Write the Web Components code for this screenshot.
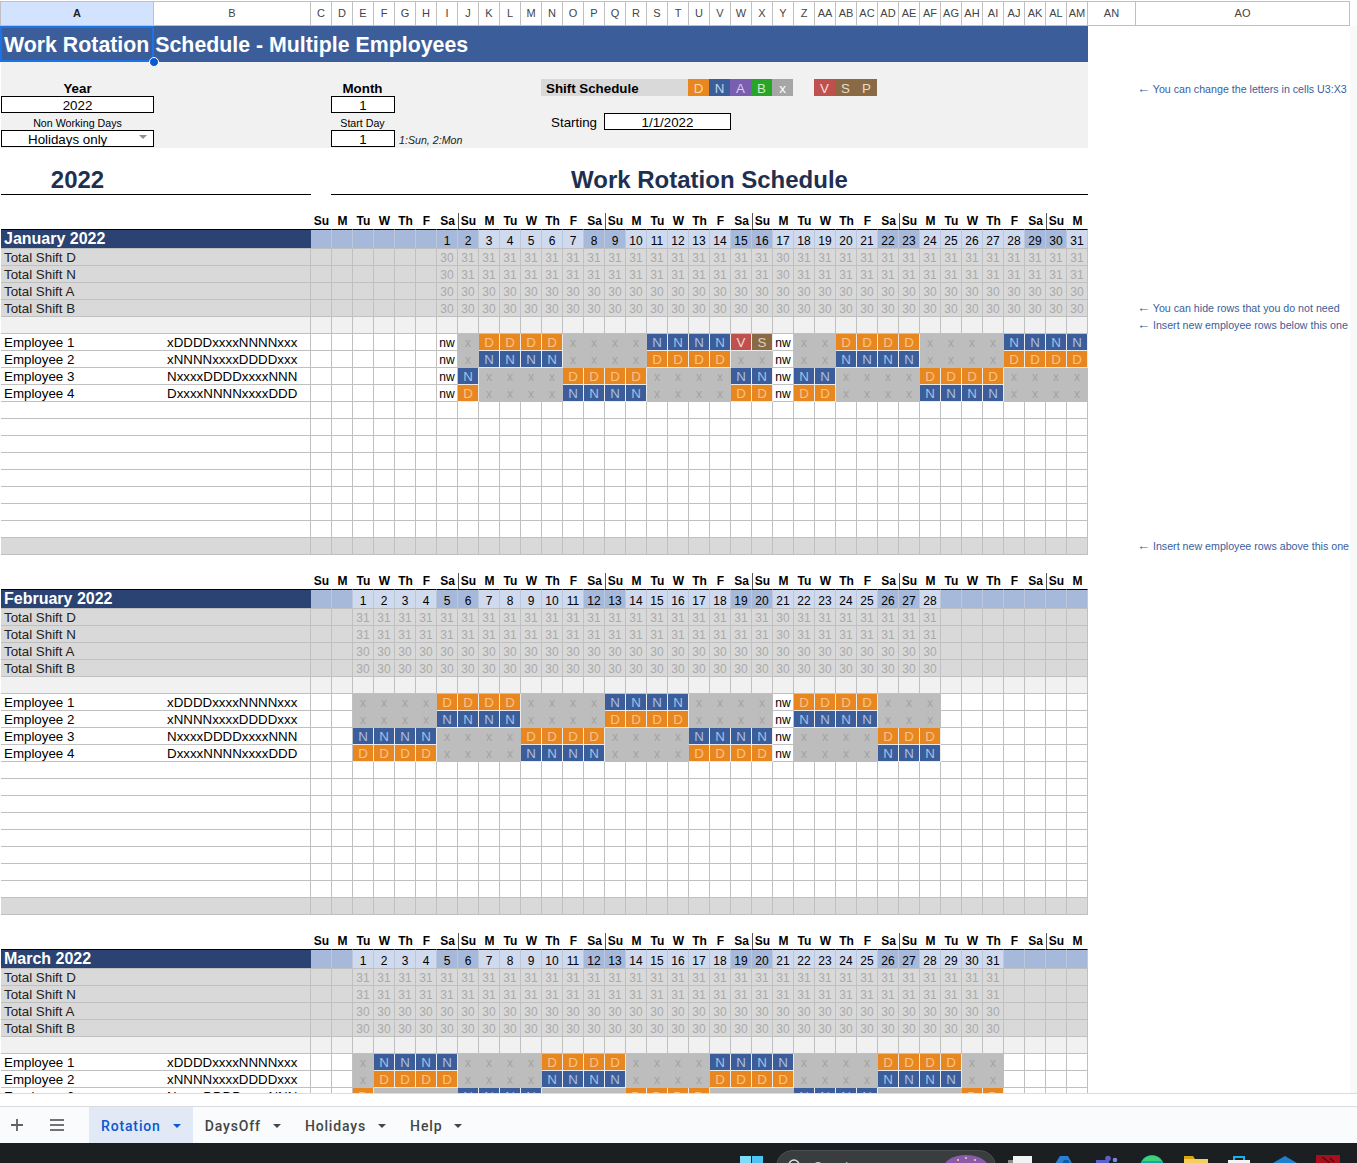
<!DOCTYPE html>
<html>
<head>
<meta charset="utf-8">
<title>Work Rotation Schedule</title>
<style>
  html, body { margin: 0; padding: 0; height: 100%; overflow: hidden; background: #fff; }
  body { font-family: "Liberation Sans", Arial, sans-serif; }
  sheet-app { height: 1163px; }
</style>
</head>
<body>
<sheet-app></sheet-app>
<script>
const COLS = '153px 157px repeat(37, 21px) 48px 214px';
const LINE = '#c0c0c0';
const WEEK = ['Su', 'M', 'Tu', 'W', 'Th', 'F', 'Sa'];

const SHARED = `
  .row { display: grid; grid-template-columns: ${COLS}; width: 1350px; padding-left: 1px; box-sizing: border-box; }
  .c { box-sizing: border-box; height: 17px; line-height: 18px; font-size: 13.33px; text-align: center;
       white-space: nowrap; overflow: hidden; border-right: 1px solid ${LINE}; border-bottom: 1px solid ${LINE}; }
  .l { text-align: left; padding-left: 3px; overflow: visible; }
  .arrow { font-size: 13px; line-height: 1; }
`;

function colName(i) {
  return i < 26 ? String.fromCharCode(65 + i) : 'A' + String.fromCharCode(39 + i);
}

class SheetColumns extends HTMLElement {
  constructor() {
    super();
    this.attachShadow({ mode: 'open' });
    let cells = '';
    for (let i = 0; i < 41; i++) {
      cells += `<div class="${i == 0 ? 'on' : ''}">${colName(i)}</div>`;
    }
    this.shadowRoot.innerHTML = `
    <style>
      :host { display: block; padding-top: 1px; }
      .bar { display: grid; grid-template-columns: ${COLS}; height: 25px; box-sizing: border-box; width: 1350px;
             border-top: 1px solid ${LINE}; border-bottom: 1px solid ${LINE}; border-left: 1px solid ${LINE}; }
      div div { border-right: 1px solid ${LINE}; box-sizing: border-box; text-align: center;
                font: 11px/23px "Liberation Sans", Arial, sans-serif; color: #444; }
      .on { background: #d3e3fd; font-weight: bold; color: #1f1f1f; }
    </style>
    <div class="bar">${cells}</div>`;
  }
}

class SheetTop extends HTMLElement {
  constructor() {
    super();
    this.attachShadow({ mode: 'open' });
    this.shadowRoot.innerHTML = `
    <style>
      :host { display: block; }
      .top { display: grid; grid-template-columns: ${COLS}; grid-template-rows: 36px 17px 17px 17px 17px 18px; width: 1350px;
             padding-left: 1px; box-sizing: border-box; position: relative; }
      .band { grid-column: 1 / 40; grid-row: 2 / 7; background: #f1f1f1; }
      .title { grid-column: 1 / 40; grid-row: 1; background: #3b5e9b; color: #fff; font-weight: bold; font-size: 21.33px;
               line-height: 38px; padding-left: 3px; white-space: nowrap; height: 36px; }
      .sel { grid-column: 1; grid-row: 1; border: 2px solid #1a73e8; margin-left: -1px; position: relative; pointer-events: none; }
      .sel i { position: absolute; right: -7px; bottom: -7px; width: 8px; height: 8px; background: #0b57d0; border: 1.5px solid #fff; border-radius: 50%; }
      .lab { text-align: center; font-size: 13.33px; line-height: 20px; color: #000; white-space: nowrap; }
      .b { font-weight: bold; }
      .small { font-size: 10.67px; line-height: 20px; }
      .box { background: #fff; border: 1px solid #000; box-sizing: border-box; text-align: center; font-size: 13.33px; line-height: 17px; color: #000; position: relative; }
      .shift { margin-left: -1px; margin-right: 1px; }
      .box.shift { margin-right: 0; }
      .drop { text-align: left; padding-left: 26px; }
      .drop::after { content: ''; position: absolute; right: 6px; top: 4px; border: 4px solid transparent; border-top: 4px solid #8e8e8e; border-bottom: 0; }
      .note { font-style: italic; font-size: 10.67px; line-height: 21px; white-space: nowrap; color: #222; padding-left: 4px; }
      .key { text-align: center; font-size: 13.33px; line-height: 20px; }
      .hint { color: #3b5e9b; font-size: 10.67px; line-height: 20px; white-space: nowrap; padding-left: 1px; }
      .arrow { font-size: 13px; line-height: 1; }
    </style>
    <div class="top">
      <div class="band"></div>
      <div class="title">Work Rotation Schedule - Multiple Employees</div>
      <div class="sel"><i></i></div>

      <div class="lab b" style="grid-column:1;grid-row:3">Year</div>
      <div class="box" style="grid-column:1;grid-row:4">2022</div>
      <div class="lab small" style="grid-column:1;grid-row:5">Non Working Days</div>
      <div class="box drop" style="grid-column:1;grid-row:6;height:17px">Holidays only</div>

      <div class="lab b shift" style="grid-column:4/7;grid-row:3">Month</div>
      <div class="box shift" style="grid-column:4/7;grid-row:4">1</div>
      <div class="lab small shift" style="grid-column:4/7;grid-row:5">Start Day</div>
      <div class="box shift" style="grid-column:4/7;grid-row:6;height:17px">1</div>
      <div class="note" style="grid-column:7/14;grid-row:6">1:Sun, 2:Mon</div>

      <div class="lab b shift" style="grid-column:14/21;grid-row:3;background:#d9d9d9;text-align:left;padding-left:5px">Shift Schedule</div>
      <div class="key shift" style="grid-column:21;grid-row:3;background:#e8861f;color:#fbd9ae">D</div>
      <div class="key shift" style="grid-column:22;grid-row:3;background:#3b5e9b;color:#c5d4ee">N</div>
      <div class="key shift" style="grid-column:23;grid-row:3;background:#7a5fb0;color:#d9cdee">A</div>
      <div class="key shift" style="grid-column:24;grid-row:3;background:#28a428;color:#c7ecc7">B</div>
      <div class="key shift" style="grid-column:25;grid-row:3;background:#a6a6a6;color:#fff">x</div>
      <div class="key shift" style="grid-column:27;grid-row:3;background:#c0504d;color:#f7dcdb">V</div>
      <div class="key shift" style="grid-column:28;grid-row:3;background:#8a6a45;color:#e8dccb">S</div>
      <div class="key shift" style="grid-column:29;grid-row:3;background:#8a6a45;color:#e8dccb">P</div>

      <div class="lab" style="grid-column:14/17;grid-row:5;text-align:right;padding-right:8px">Starting</div>
      <div class="box shift" style="grid-column:17/23;grid-row:5">1/1/2022</div>

      <div class="hint" style="grid-column:41;grid-row:3"><span class="arrow">&#8592;</span> You can change the letters in cells U3:X3</div>
    </div>`;
  }
}

class SheetHeading extends HTMLElement {
  constructor() {
    super();
    this.attachShadow({ mode: 'open' });
    this.shadowRoot.innerHTML = `
    <style>
      :host { display: block; padding-top: 17px; }
      .row { display: grid; grid-template-columns: ${COLS}; width: 1350px; padding-left: 1px; box-sizing: border-box; }
      h1 { margin: 0; height: 30px; box-sizing: border-box; border-bottom: 1px solid #000; color: #1f2f50; font-size: 24px;
           line-height: 30px; font-weight: bold; text-align: center; white-space: nowrap; }
      .a { grid-column: 1 / 3; padding-right: 157px; }
      .b { grid-column: 4 / 40; margin-left: -1px; }
    </style>
    <div class="row"><h1 class="a">2022</h1><h1 class="b">Work Rotation Schedule</h1></div>`;
  }
}

class SheetMonth extends HTMLElement {
  constructor() {
    super();
    this.attachShadow({ mode: 'open' });
  }

  connectedCallback() {
    const name = this.getAttribute('name');
    const start = +this.getAttribute('start');
    const days = +this.getAttribute('days');
    const nw = (this.getAttribute('nw') || '').split(',').filter(Boolean).map(Number);
    const counter = +this.getAttribute('counter');
    const notes = JSON.parse(this.getAttribute('notes') || '{}');
    const marks = JSON.parse(this.getAttribute('marks') || '{}');
    const thirty = (this.getAttribute('thirty') || '').split(',').filter(Boolean).map(Number);

    let html = '';

    // weekday row
    let cells = '<div class="wk" style="grid-column:1/3"></div>';
    for (let i = 0; i < 37; i++) {
      const cut = i % 7 == 6 && i < 36;
      cells += `<div class="wk${cut ? ' cut' : ''}">${WEEK[i % 7]}</div>`;
    }
    html += `<div class="row">${cells}</div>`;

    // month title row with day numbers
    cells = `<div class="mon" style="grid-column:1/3">${name}</div>`;
    for (let i = 0; i < 37; i++) {
      const d = i - start + 1;
      const inMonth = d >= 1 && d <= days;
      const wend = i % 7 == 6 || i % 7 == 0;
      cells += `<div class="day ${(!inMonth || wend) ? 'dark' : ''}">${inMonth ? d : ''}</div>`;
    }
    html += `<div class="row">${cells}</div>`;

    // shift totals
    ['D', 'N', 'A', 'B'].forEach(s => {
      cells = `<div class="c l tot" style="color:#222;grid-column:1/3">Total Shift ${s}</div>`;
      for (let i = 0; i < 37; i++) {
        const d = i - start + 1;
        let v = '';
        if (d >= 1 && d <= days) {
          if (s == 'A' || s == 'B') v = 30;
          else v = thirty.includes(d) ? 30 : 31;
        }
        cells += `<div class="c tot num">${v}</div>`;
      }
      const note = notes['T' + s];
      html += `<div class="row">${cells}${note ? this.hint(note) : ''}</div>`;
    });

    html += this.plainRow('soft', notes.soft);

    // employee rows
    const staff = [
      ['Employee 1', 'xDDDDxxxxNNNNxxx'],
      ['Employee 2', 'xNNNNxxxxDDDDxxx'],
      ['Employee 3', 'NxxxxDDDDxxxxNNN'],
      ['Employee 4', 'DxxxxNNNNxxxxDDD']
    ];
    staff.forEach(([who, pat], e) => {
      cells = `<div class="c l emp">${who}<span class="pat">${pat}</span></div><div class="c"></div>`;
      let n = counter;
      for (let i = 0; i < 37; i++) {
        const d = i - start + 1;
        if (d < 1 || d > days) { cells += '<div class="c"></div>'; continue; }
        if (nw.includes(d)) { cells += '<div class="c nw">nw</div>'; continue; }
        let s = pat[n % 16];
        n++;
        const mark = marks[e + ':' + d];
        if (mark) s = mark;
        cells += `<div class="c s-${s}">${s}</div>`;
      }
      html += `<div class="row">${cells}</div>`;
    });

    if (!this.hasAttribute('clip')) {
      for (let i = 0; i < 8; i++) html += this.plainRow('');
      html += this.plainRow('shade', notes.shade);
    }
    this.shadowRoot.innerHTML = `<style>${this.css()}</style>${html}`;
  }

  hint(text) {
    return `<div class="hint"><span class="arrow">&#8592;</span> ${text}</div>`;
  }

  plainRow(kind, note) {
    let cells = `<div class="c ${kind}" style="grid-column:1/3"></div>`;
    for (let i = 0; i < 37; i++) cells += `<div class="c ${kind}"></div>`;
    return `<div class="row">${cells}${note ? this.hint(note) : ''}</div>`;
  }

  css() {
    return `
      ${SHARED}
      :host { display: block; padding-top: 18px; font-family: "Liberation Sans", Arial, sans-serif; color: #000; }
      .wk { height: 16px; line-height: 17px; font-size: 12px; font-weight: bold; text-align: center; }
      .wk.cut { border-right: 1px solid #555; margin-right: -1px; }
      .mon { height: 20px; background: #2a4372; color: #fff; font-weight: bold; font-size: 16px; line-height: 18px; padding-left: 3px;
             border-top: 1px solid #000; border-bottom: 1px solid ${LINE}; box-sizing: border-box; white-space: nowrap; }
      .day { height: 20px; background: #cfdaef; border-top: 1px solid #000; border-right: 1px solid #bcc7dc; border-bottom: 1px solid ${LINE};
             box-sizing: border-box; font-size: 12px; line-height: 22px; text-align: center; }
      .day.dark { background: #a6b9db; }
      .tot { background: #d9d9d9; }
      .num { color: #a9a9a9; font-size: 12px; }
      .soft { background: #f1f1f1; }
      .shade { background: #d9d9d9; }
      .emp { position: relative; overflow: visible; border-right: 0; }
      .pat { position: absolute; left: 166px; top: 0; }
      .nw { font-size: 12px; }
      .s-x { background: #bdbdbd; color: #a3a3a3; border-color: #bdbdbd; font-size: 12px; }
      .s-D { background: #e8861f; color: #f8c48b; border-color: #eaeaea; }
      .s-N { background: #3b5e9b; color: #a9bfe4; border-color: #eaeaea; }
      .s-V { background: #c0504d; color: #f5d6d4; border-color: #eaeaea; }
      .s-S { background: #8a6a45; color: #dccfbd; border-color: #eaeaea; }
      .hint { color: #3b5e9b; font-size: 10.67px; line-height: 17px; white-space: nowrap; grid-column: 41; padding-left: 1px; height: 17px; }
    `;
  }
}

class SheetTabs extends HTMLElement {
  constructor() {
    super();
    this.attachShadow({ mode: 'open' });
    this.shadowRoot.innerHTML = `
    <style>
      :host { display: flex; align-items: stretch; height: 36px; background: #f9fbfd; font-family: Roboto, "Noto Sans", sans-serif;
              font-size: 14px; letter-spacing: .85px; color: #444746; box-sizing: border-box; }
      .tool { width: 40px; display: flex; align-items: center; justify-content: center; flex: none; }
      .tab { display: flex; align-items: center; gap: 12px; padding: 2px 12px 0; font-weight: 500; flex: none; }
      .tab.on { background: #e1e9f7; color: #0b57d0; margin-left: 12px; }
      .tab i { width: 0; height: 0; border: 4px solid transparent; border-top: 4.5px solid currentColor; border-bottom: 0; }
    </style>
    <div class="tool" style="margin-left:-3px"><svg width="14" height="14" viewBox="0 0 14 14"><path d="M7 1v12M1 7h12" stroke="#5f6368" stroke-width="1.8"/></svg></div>
    <div class="tool"><svg width="16" height="14" viewBox="0 0 16 14"><path d="M1 2h14M1 7h14M1 12h14" stroke="#444746" stroke-width="1.6"/></svg></div>
    <div class="tab on">Rotation<i></i></div>
    <div class="tab">DaysOff<i></i></div>
    <div class="tab">Holidays<i></i></div>
    <div class="tab">Help<i></i></div>`;
  }
}

class SheetTaskbar extends HTMLElement {
  constructor() {
    super();
    this.attachShadow({ mode: 'open' });
    this.shadowRoot.innerHTML = `
    <style>
      :host { display: block; height: 20px; background: #1c1f22; overflow: hidden; }
      svg { display: block; }
    </style>
    <svg width="1357" height="20" viewBox="0 0 1357 20">
      <rect x="740" y="13" width="11" height="11" fill="#7fdcf9"/>
      <rect x="752" y="13" width="11" height="11" fill="#4fc3f2"/>
      <rect x="776.5" y="7.5" width="219" height="32" rx="16" fill="#3a3d40" stroke="#4d5053"/>
      <circle cx="794" cy="22" r="5" fill="none" stroke="#e4e4e4" stroke-width="1.5"/>
      <text x="814" y="28" font-family="Liberation Sans, sans-serif" font-size="12" fill="#cfcfcf">Search</text>
      <ellipse cx="966" cy="26" rx="23" ry="14" fill="#8b5aa8"/>
      <circle cx="958" cy="17" r="1" fill="#f5d8a0"/><circle cx="966" cy="15" r="1" fill="#f5d8a0"/><circle cx="975" cy="17" r="1" fill="#f5d8a0"/>
      <rect x="1013" y="13" width="19" height="12" fill="#f2f2f2"/>
      <rect x="1008" y="17" width="5" height="3" fill="#8a8a8a"/>
      <path d="M1053 24l7-11h8l6 11z" fill="#2a7fd4"/>
      <path d="M1060 24l4-7h4l4 7z" fill="#1257a8"/>
      <rect x="1096" y="17" width="13" height="8" fill="#5b5fc7"/>
      <circle cx="1108" cy="15.5" r="2.8" fill="#5b5fc7"/>
      <circle cx="1115" cy="17" r="2.3" fill="#7b83eb"/>
      <circle cx="1152" cy="24" r="12" fill="#18a7a0"/>
      <path d="M1142 18a12 12 0 0 1 20 0z" fill="#3fd07a"/>
      <rect x="1184" y="16" width="24" height="8" fill="#f4ce5a"/>
      <path d="M1184 16v-3h9l2 3z" fill="#d9a514"/>
      <rect x="1228" y="17" width="22" height="8" fill="#f5f5f5"/>
      <path d="M1234 17v-3h10v3" fill="none" stroke="#1ab0ec" stroke-width="2"/>
      <path d="M1273 20l12-7 12 7v5h-24z" fill="#1f7fd0"/>
      <rect x="1316" y="12" width="24" height="12" fill="#a80f1e"/>
      <path d="M1322 14l8 6M1330 15l4 4" stroke="#4a0a10" stroke-width="1.4"/>
    </svg>`;
  }
}

class SheetApp extends HTMLElement {
  constructor() {
    super();
    this.attachShadow({ mode: 'open' });
    this.shadowRoot.innerHTML = `
    <style>
      :host { display: flex; flex-direction: column; width: 1357px; font-family: "Liberation Sans", Arial, sans-serif; background: #fff; }
      .grid { height: 1067px; overflow: hidden; flex: none; display: flex; }
      .body { width: 1350px; flex: none; }
      .rail { flex: 1; background: #f8f9f9; }
      .gap { height: 14px; box-sizing: border-box; flex: none; background: #fff; border-top: 1px solid #dadce0; border-bottom: 1px solid #dadce0; }
    </style>
    <sheet-columns></sheet-columns>
    <div class="grid">
      <div class="body">
        <sheet-top></sheet-top>
        <sheet-heading></sheet-heading>
        <sheet-month name="January 2022" start="6" days="31" nw="1,17" counter="0" thirty="1,17"
          marks='{"0:15":"V","0:16":"S"}'
          notes='{"TB":"You can hide rows that you do not need","soft":"Insert new employee rows below this one","shade":"Insert new employee rows above this one"}'></sheet-month>
        <sheet-month name="February 2022" start="2" days="28" nw="21" counter="29" thirty="21"></sheet-month>
        <sheet-month name="March 2022" start="2" days="31" counter="56" clip></sheet-month>
      </div>
      <div class="rail"></div>
    </div>
    <div class="gap"></div>
    <sheet-tabs></sheet-tabs>
    <sheet-taskbar></sheet-taskbar>`;
  }
}

customElements.define('sheet-columns', SheetColumns);
customElements.define('sheet-top', SheetTop);
customElements.define('sheet-heading', SheetHeading);
customElements.define('sheet-month', SheetMonth);
customElements.define('sheet-tabs', SheetTabs);
customElements.define('sheet-taskbar', SheetTaskbar);
customElements.define('sheet-app', SheetApp);
</script>
</body>
</html>
